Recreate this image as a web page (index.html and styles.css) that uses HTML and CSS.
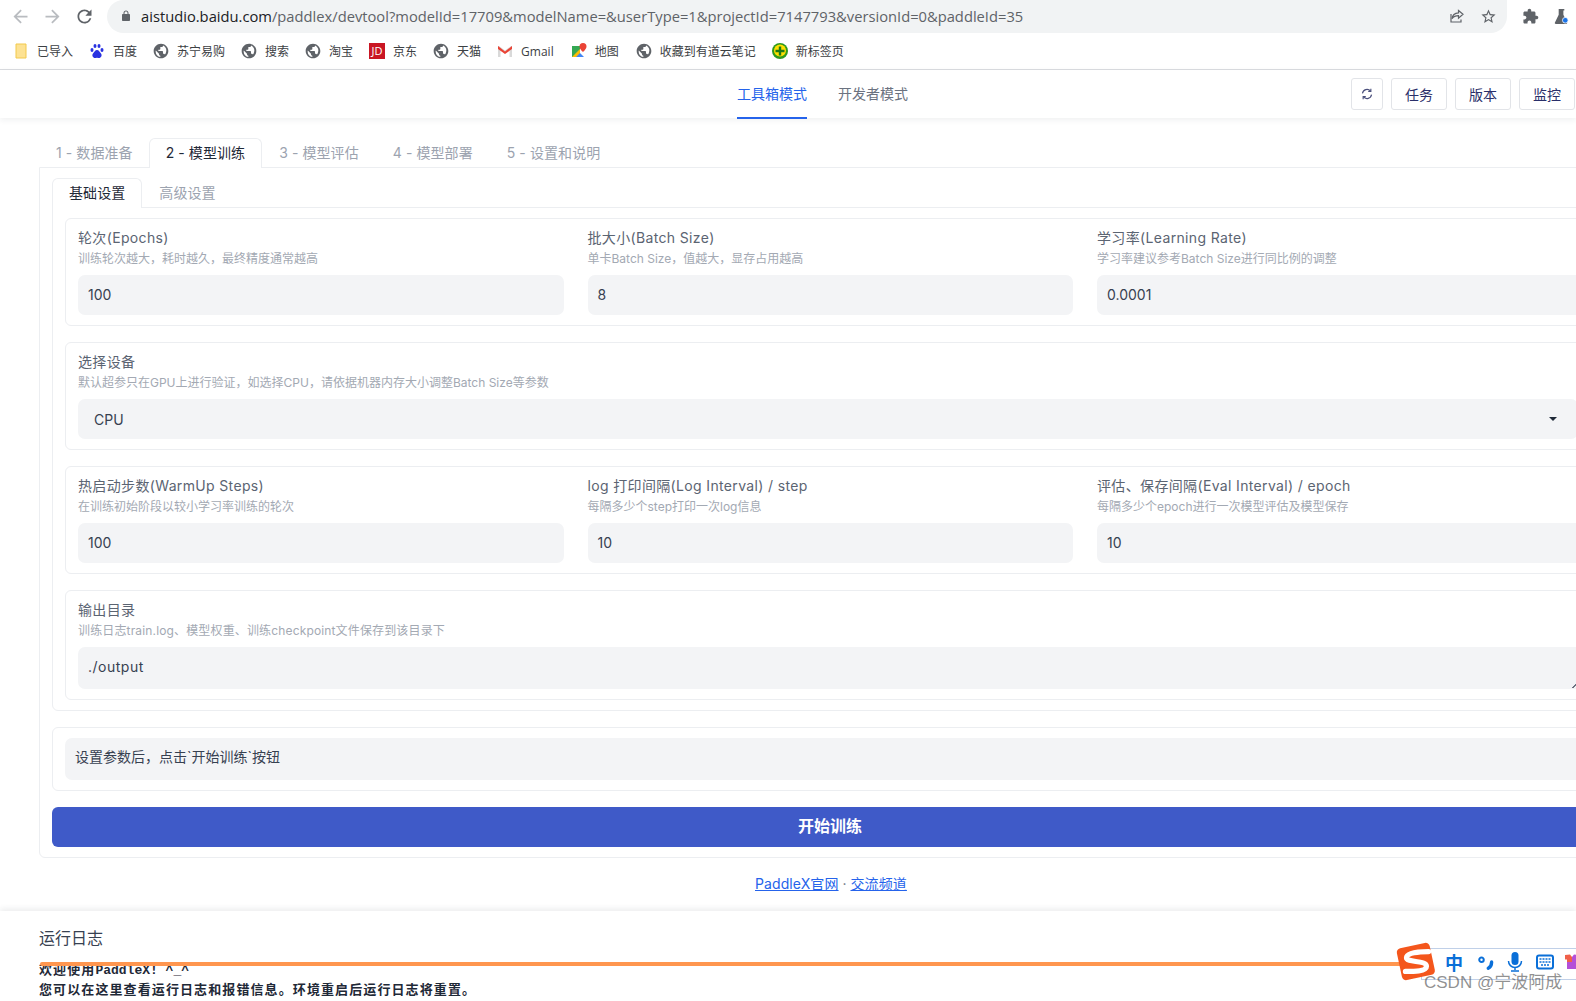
FILE: index.html
```html
<!DOCTYPE html>
<html lang="zh-CN">
<head>
<meta charset="utf-8">
<title>PaddleX</title>
<link rel="stylesheet" href="styles.css">
</head>
<body>
<svg class="defs" width="0" height="0" aria-hidden="true">
  <symbol id="globe" viewBox="0 0 24 24"><path d="M12 1C5.9 1 1 5.9 1 12s4.9 11 11 11 11-4.9 11-11S18.100 1 12 1zm-1 19.900c-3.950-.49-7-3.850-7-7.930 0-.62.08-1.210.21-1.790L9 16v1c0 1.100.9 2 2 2v1.900zm6.900-3.500c-.26-.81-1-1.390-1.900-1.390h-1v-3c0-.55-.45-1-1-1H8v-2h2c.55 0 1-.45 1-1V6h2c1.100 0 2-.9 2-2v-.41c2.930 1.190 5 4.060 5 7.410 0 2.080-.8 5-2.100 6.400z"/></symbol>
</svg>

<div class="browser">
  <div class="toolbar">
    <div class="nav-icons">
      <svg class="ic dim" viewBox="0 0 24 24"><path d="M20 11H7.830l5.590-5.590L12 4l-8 8 8 8 1.410-1.410L7.830 13H20v-2z"/></svg>
      <svg class="ic dim" viewBox="0 0 24 24"><path d="M12 4l-1.410 1.410L16.170 11H4v2h12.170l-5.580 5.590L12 20l8-8z"/></svg>
      <svg class="ic" viewBox="0 0 24 24"><path d="M17.650 6.350A7.958 7.958 0 0 0 12 4c-4.420 0-7.990 3.580-7.990 8s3.570 8 7.990 8c3.730 0 6.840-2.550 7.730-6h-2.080A5.990 5.990 0 0 1 12 18c-3.310 0-6-2.690-6-6s2.690-6 6-6c1.660 0 3.140.69 4.220 1.780L13 11h7V4l-2.350 2.350z"/></svg>
    </div>
    <div class="omnibox">
      <svg class="lock" viewBox="0 0 24 24"><path d="M18 8h-1V6c0-2.760-2.240-5-5-5S7 3.240 7 6v2H6c-1.100 0-2 .9-2 2v10c0 1.100.9 2 2 2h12c1.100 0 2-.9 2-2V10c0-1.100-.9-2-2-2zM9 6c0-1.660 1.340-3 3-3s3 1.340 3 3v2H9V6z"/></svg>
      <span class="url"><span class="url-host">aistudio.baidu.com</span>/paddlex/devtool?modelId=17709&amp;modelName=&amp;userType=1&amp;projectId=7147793&amp;versionId=0&amp;paddleId=35</span>
      <svg class="omni-ic share" viewBox="0 0 16 16"><path d="M9.500 2.500 14 6.300l-4.500 3.800V7.700c-3 0-5 .9-6.500 3 .4-3.300 2.500-5.500 6.500-5.800z"/><path d="M2 6v8h10v-2.500"/></svg>
      <svg class="omni-ic star" viewBox="0 0 24 24"><path d="M22 9.240l-7.190-.62L12 2 9.190 8.630 2 9.240l5.460 4.730L5.820 21 12 17.270 18.180 21l-1.630-7.030L22 9.240zM12 15.400l-3.760 2.270 1-4.280-3.320-2.880 4.380-.38L12 6.100l1.710 4.040 4.380.38-3.320 2.880 1 4.280L12 15.400z"/></svg>
    </div>
    <div class="ext-icons">
      <svg class="ic puzzle" viewBox="0 0 24 24"><path d="M20.500 11H19V7c0-1.100-.9-2-2-2h-4V3.500C13 2.120 11.880 1 10.500 1S8 2.120 8 3.500V5H4c-1.100 0-1.990.9-1.990 2v3.800H3.500c1.490 0 2.700 1.210 2.700 2.700s-1.210 2.700-2.700 2.700H2V20c0 1.100.9 2 2 2h3.800v-1.500c0-1.490 1.210-2.700 2.700-2.700 1.490 0 2.700 1.210 2.700 2.700V22H17c1.100 0 2-.9 2-2v-4h1.500c1.380 0 2.500-1.120 2.500-2.500S21.880 11 20.500 11z"/></svg>
      <svg class="flask" viewBox="0 0 16 16"><path class="flask-body" d="M5 0h6v1.500h-1V6l4 8.500c.2.700-.2 1.500-1 1.500H2c-1 0-1.400-.8-1-1.500L5 6V1.500H5z"/><circle class="flask-dot" cx="12" cy="12" r="3"/></svg>
    </div>
  </div>
  <div class="bookmarks">
    <div class="bm"><svg class="bm-ic" viewBox="0 0 16 16"><path class="folder" d="M3 1h7l3 0v14H3z"/></svg>已导入</div>
    <div class="bm"><svg class="bm-ic" viewBox="0 0 16 16"><g class="paw"><ellipse cx="3" cy="7" rx="1.500" ry="2"/><ellipse cx="6" cy="3" rx="1.500" ry="2"/><ellipse cx="10" cy="3" rx="1.500" ry="2"/><ellipse cx="13" cy="7" rx="1.500" ry="2"/><path d="M8 7c-2 0-2.500 2-4 3.500C2.500 12.500 4 15 6 15c1 0 1.300-.3 2-.3s1 .3 2 .3c2 0 3.500-2.500 2-4.500C10.500 9 10 7 8 7z"/></g></svg>百度</div>
    <div class="bm"><svg class="bm-ic globe"><use href="#globe"/></svg>苏宁易购</div>
    <div class="bm"><svg class="bm-ic globe"><use href="#globe"/></svg>搜索</div>
    <div class="bm"><svg class="bm-ic globe"><use href="#globe"/></svg>淘宝</div>
    <div class="bm"><span class="jd">JD</span>京东</div>
    <div class="bm"><svg class="bm-ic globe"><use href="#globe"/></svg>天猫</div>
    <div class="bm bm-wide"><svg class="bm-ic" viewBox="0 0 16 16"><path class="m-side" d="M1 3v11h2.500V6.500L8 10l4.500-3.500V14H15V3h-1L8 7.500 2 3z"/><path class="m-top" d="M1 3l7 5.500L15 3v3l-7 5-7-5z"/></svg>Gmail</div>
    <div class="bm bm-wide"><svg class="bm-ic" viewBox="0 0 16 16"><path class="map-g" d="M1 3h8v11H1z"/><path class="map-y" d="M1 14 9 6v8z"/><path class="map-b" d="M5 14l4-4 4 4z"/><path class="map-r" d="M12 0a3.500 3.500 0 0 0-3.500 3.500C8.500 6 12 9 12 9s3.500-3 3.500-5.500A3.500 3.500 0 0 0 12 0z"/></svg>地图</div>
    <div class="bm"><svg class="bm-ic globe"><use href="#globe"/></svg>收藏到有道云笔记</div>
    <div class="bm"><svg class="bm-ic" viewBox="0 0 16 16"><circle class="q-g" cx="8" cy="8" r="8"/><circle class="q-y" cx="8" cy="7.500" r="6"/><path class="q-p" d="M6.800 3.500h2.400v3.300h3.300v2.400H9.200v3.300H6.800V9.200H3.500V6.800h3.300z"/></svg>新标签页</div>
  </div>
</div>

<header class="topbar">
  <nav class="modes">
    <a class="mode mode-on">工具箱模式</a>
    <a class="mode">开发者模式</a>
  </nav>
  <div class="actions">
    <button class="btn btn-icon"><svg viewBox="0 0 16 16"><path d="M2.800 7.200A5.300 5.300 0 0 1 12 4.600M13.200 8.800A5.300 5.300 0 0 1 4 11.400"/><path d="M12.400 2v3h-3M3.600 14v-3h3"/></svg></button>
    <button class="btn">任务</button>
    <button class="btn">版本</button>
    <button class="btn">监控</button>
  </div>
</header>

<main class="main">
  <div class="tabs">
    <div class="tab tab-first">1 - 数据准备</div>
    <div class="tab tab-on">2 - 模型训练</div>
    <div class="tab">3 - 模型评估</div>
    <div class="tab">4 - 模型部署</div>
    <div class="tab">5 - 设置和说明</div>
  </div>
  <section class="panel">
    <div class="tabs">
      <div class="tab tab-on">基础设置</div>
      <div class="tab">高级设置</div>
    </div>
    <div class="subpanel">
      <div class="card grid3">
        <div class="field"><div class="label">轮次(Epochs)</div><div class="hint">训练轮次越大，耗时越久，最终精度通常越高</div><div class="input">100</div></div>
        <div class="field"><div class="label">批大小(Batch Size)</div><div class="hint">单卡Batch Size，值越大，显存占用越高</div><div class="input">8</div></div>
        <div class="field"><div class="label">学习率(Learning Rate)</div><div class="hint">学习率建议参考Batch Size进行同比例的调整</div><div class="input">0.0001</div></div>
      </div>
      <div class="card">
        <div class="label">选择设备</div>
        <div class="hint">默认超参只在GPU上进行验证，如选择CPU，请依据机器内存大小调整Batch Size等参数</div>
        <div class="input select"><span>CPU</span><i class="caret"></i></div>
      </div>
      <div class="card grid3">
        <div class="field"><div class="label">热启动步数(WarmUp Steps)</div><div class="hint">在训练初始阶段以较小学习率训练的轮次</div><div class="input">100</div></div>
        <div class="field"><div class="label">log 打印间隔(Log Interval) / step</div><div class="hint">每隔多少个step打印一次log信息</div><div class="input">10</div></div>
        <div class="field"><div class="label">评估、保存间隔(Eval Interval) / epoch</div><div class="hint">每隔多少个epoch进行一次模型评估及模型保存</div><div class="input">10</div></div>
      </div>
      <div class="card">
        <div class="label">输出目录</div>
        <div class="hint hint-wide">训练日志train.log、模型权重、训练checkpoint文件保存到该目录下</div>
        <div class="input textarea">./output</div>
      </div>
    </div>
    <div class="card card-status"><div class="status">设置参数后，点击`开始训练`按钮</div></div>
    <button class="start">开始训练</button>
  </section>
  <div class="links"><a>PaddleX官网</a> · <a>交流频道</a></div>
</main>

<section class="log">
  <h2 class="log-title">运行日志</h2>
  <div class="log-text">
    <div>欢迎使用<span class="log-latin">PaddleX! ^_^</span></div>
    <div>您可以在这里查看运行日志和报错信息。环境重启后运行日志将重置。</div>
  </div>
</section>

<div class="orange-line"></div>
<div class="ime">
  <svg class="ime-logo" viewBox="0 0 40 38"><rect class="ime-s-bg" x="3" y="3" width="32" height="31" rx="4" transform="rotate(-12 19 19)"/><path class="ime-s" d="M31 9 C22 9 10 10 10 15 C10 20 29 17 29 23 C29 28 16 28 9 28"/></svg>
  <span class="ime-zh">中</span>
  <svg class="ime-ic punc" viewBox="0 0 16 16"><circle class="punc-dot" cx="4" cy="6" r="2"/><path class="punc-comma" d="M13 8c0 3-1 4.500-3 5.500"/></svg>
  <svg class="ime-ic mic" viewBox="0 0 16 20"><rect x="4.500" y="0" width="7" height="13" rx="3.500"/><path class="mic-arc" d="M1.500 9a6.500 6.500 0 0 0 13 0M8 15.500V18M4 19h8"/></svg>
  <svg class="ime-ic kbd" viewBox="0 0 18 16"><rect class="kbd-box" x="1" y="1.500" width="16" height="13" rx="2"/><path class="kbd-keys" d="M3.500 5h11M3.500 8h11M5 11h8"/></svg>
  <svg class="ime-ic shirt" viewBox="0 0 16 16"><path class="shirt-r" d="M1 1l5-.5L8 3V8H3V5.500H1z"/><path class="shirt-p" d="M8 3l2-2.500 5 .5v4.500h-2V15H3V8h5z"/></svg>
</div>
<div class="watermark">CSDN @宁波阿成</div>
</body>
</html>
```
FILE: styles.css
```css
* { box-sizing: border-box; }
html, body { margin: 0; padding: 0; }
body {
  width: 1576px;
  height: 1001px;
  overflow: hidden;
  background: #fff;
  position: relative;
  color: #374151;
  font-family: Inter, "Noto Sans CJK SC", sans-serif;
  font-size: 14px;
}
.defs { position: absolute; }

/* browser chrome */
.browser { height: 70px; border-bottom: 1px solid #dadce0; font-family: "Open Sans", "Noto Sans CJK SC", sans-serif; }
.toolbar { height: 33px; display: flex; align-items: center; }
.nav-icons { width: 107px; padding-left: 10px; display: flex; gap: 11px; }
.ic { width: 21px; height: 21px; fill: #5f6368; flex: none; }
.ic.dim { fill: #b9bcc0; }
.omnibox {
  width: 1400px; height: 33px; margin-top: -1px;
  background: #f1f3f4;
  border-radius: 0 0 17px 17px / 0 0 17px 17px;
  border-top-left-radius: 17px;
  display: flex; align-items: center;
  padding: 0 10px 0 13px;
}
.lock { width: 12px; height: 12px; fill: #5f6368; flex: none; }
.url { margin-left: 9px; font-size: 14.73px; line-height: 30px; color: #5f6368; flex: 1; white-space: nowrap; }
.url-host { color: #202124; }
.omni-ic { flex: none; }
.share { width: 16px; height: 16px; fill: none; stroke: #5f6368; stroke-width: 1.200; margin-right: 15px; }
.star { width: 17px; height: 17px; fill: #5f6368; }
.ext-icons { display: flex; align-items: center; padding-left: 15px; gap: 15px; }
.puzzle { width: 17px; height: 17px; }
.flask { width: 15px; height: 15px; flex: none; }
.flask-body { fill: #5f6368; }
.flask-dot { fill: #1a73e8; stroke: #fff; stroke-width: .8; }

.bookmarks { height: 36px; display: flex; align-items: center; padding-left: 13px; gap: 16px; font-size: 12px; color: #3c4043; }
.bm { display: flex; align-items: center; gap: 8px; white-space: nowrap; }
.bm-wide { margin-right: 1px; }
.bm-ic { width: 16px; height: 16px; flex: none; }
.globe { fill: #5f6368; }
.folder { fill: #fde293; stroke: #f2c94c; stroke-width: 1; }
.paw { fill: #2932e1; }
.jd { width: 16px; height: 16px; background: #c91623; color: #fff; font-size: 11px; line-height: 16px; text-align: center; }
.m-side { fill: #d9d9d9; }
.m-top { fill: #ea4335; }
.map-g { fill: #34a853; }
.map-y { fill: #fbbc04; }
.map-b { fill: #4285f4; }
.map-r { fill: #ea4335; }
.q-g { fill: #2e9a1e; }
.q-y { fill: #ffe000; }
.q-p { fill: #1c7a14; }

/* app header */
.topbar { height: 48px; display: flex; align-items: center; background: #fff; box-shadow: 0 2px 6px rgba(31, 41, 55, .07); position: relative; }
.modes { margin-left: 737px; height: 48px; display: flex; gap: 31px; }
.mode { height: 49px; line-height: 47px; color: #6b7280; font-size: 14px; }
.mode-on { color: #2563eb; border-bottom: 2px solid #2563eb; }
.actions { margin-left: auto; padding-right: 1px; display: flex; gap: 8px; }
.btn {
  width: 56px; height: 32px; padding: 0;
  background: #fff; border: 1px solid #e2e4e8; border-radius: 3px;
  color: #2a2f6a; font: 14px "Noto Sans CJK SC", sans-serif;
  display: flex; align-items: center; justify-content: center;
}
.btn-icon { width: 32px; }
.btn-icon svg { width: 14px; height: 14px; fill: none; stroke: #4a4f7c; stroke-width: 1.300; }

/* main */
.main { width: 1700px; padding: 20px 0 0 39px; }
.tabs { display: flex; height: 29px; color: #9ca3af; line-height: 29px; letter-spacing: .08px; }
.tab { padding: 0 17px; white-space: nowrap; margin-bottom: -1px; height: 30px; position: relative; }
.tab-first { margin-right: -1px; }
.tab-on { color: #1f2937; background: #fff; border: 1px solid #eceef1; border-bottom: 0; border-radius: 6px 6px 0 0; padding: 0 16px; line-height: 28px; }
.panel { border: 1px solid #eceef1; border-radius: 0 6px 6px 6px; padding: 10px 12px; }
.subpanel { border: 1px solid #eceef1; border-radius: 0 6px 6px 6px; padding: 10px 12px; display: flex; flex-direction: column; gap: 16px; }
.card { border: 1px solid #eceef1; border-radius: 6px; padding: 8px 12px 10px; }
.grid3 { display: grid; grid-template-columns: repeat(3, 485.5px) ; column-gap: 24px; }
.label { height: 22px; line-height: 22px; color: #5b6472; font-size: 14px; white-space: nowrap; letter-spacing: .35px; }
.hint { height: 18px; line-height: 20px; color: #a3a9b3; font-size: 12px; white-space: nowrap; }
.hint-wide { letter-spacing: .15px; }
.input { height: 40px; margin-top: 8px; background: #f3f4f6; border-radius: 7px; padding: 0 10px; line-height: 39px; color: #374151; font-size: 14px; }
.select { display: flex; justify-content: space-between; align-items: center; padding: 0 21px 0 16px; width: 1500px; }
.caret { width: 0; height: 0; border: 4px solid transparent; border-top: 4px solid #1f2937; border-bottom: 0; }
.textarea { height: 42px; width: 1520px; letter-spacing: .5px; position: relative; }
.textarea::after { content: ""; position: absolute; left: 1494px; bottom: 1px; width: 4px; height: 4px; background: linear-gradient(135deg, transparent 45%, #6b7280 45%, #6b7280 65%, transparent 65%); }
.card-status { margin-top: 16px; padding: 10px 12px; height: 64px; }
.status { height: 42px; line-height: 38px; background: #f3f4f6; border-radius: 7px; padding: 0 10px; color: #374151; }
.start {
  display: block; width: 100%; height: 40px; margin: 16px 0 0; padding: 0 60px 4px 0;
  background: #3f5ac8; border: 0; border-radius: 6px;
  color: #fff; font: bold 16px "Noto Sans CJK SC", sans-serif; text-align: left; text-indent: 746px;
}
.links { margin-top: 16px; margin-left: 716px; height: 20px; line-height: 20px; color: #6b7280; }
.links a { color: #2563eb; text-decoration: underline; letter-spacing: .1px; }

/* log */
.log { margin-top: 17px; height: 93px; padding: 15px 39px 0; background: #fff; box-shadow: 0 -2px 6px rgba(31, 41, 55, .09); }
.log-title { margin: 0; font-size: 16px; font-weight: 400; line-height: 24px; color: #374151; }
.log-text { margin-top: 11px; font: bold 13px/20px "Liberation Mono", "Noto Sans CJK SC", monospace; color: #1f2937; letter-spacing: 1.1px; }
.log-latin { letter-spacing: 0; }

/* overlays */
.orange-line { position: absolute; left: 40px; top: 962px; width: 1365px; height: 4px; background: #ff964f; border-radius: 2px 0 0 2px; }
.ime {
  position: absolute; left: 1396px; top: 941px; width: 180px; height: 41px;
  display: flex; align-items: center;
}
.ime::before { content: ""; position: absolute; left: 25px; right: -1px; top: 7px; bottom: 2px; border: 1px solid #c0d0e8; background: #fff; }
.ime > * { position: relative; flex: none; }
.ime-logo { width: 42px; height: 40px; }
.ime-s-bg { fill: #f4561c; }
.ime-s { fill: none; stroke: #fff; stroke-width: 5; stroke-linecap: round; }
.ime-zh { margin-left: 7px; width: 18px; color: #0a6fd8; font: bold 18px/24px "Noto Sans CJK SC", sans-serif; }
.ime-ic { height: 20px; }
.punc { margin-left: 14px; width: 18px; height: 18px; }
.punc-dot { fill: none; stroke: #0a6fd8; stroke-width: 1.800; }
.punc-comma { fill: none; stroke: #0a6fd8; stroke-width: 3; stroke-linecap: round; }
.mic { margin-left: 12px; width: 16px; fill: #0a6fd8; }
.mic-arc { fill: none; stroke: #0a6fd8; stroke-width: 1.500; }
.kbd { margin-left: 13px; width: 18px; height: 16px; }
.kbd-box { fill: #fff; stroke: #0a6fd8; stroke-width: 2; }
.kbd-keys { fill: none; stroke: #0a6fd8; stroke-width: 1.500; stroke-dasharray: 2 1; }
.shirt { margin-left: 10px; width: 16px; height: 16px; }
.shirt-r { fill: #f0604a; }
.shirt-p { fill: #b44fd8; }
.watermark { position: absolute; left: 1424px; top: 972px; font: 17px/22px "Liberation Sans", "Noto Sans CJK SC", sans-serif; color: rgba(70, 70, 70, .6); white-space: nowrap; }
```
